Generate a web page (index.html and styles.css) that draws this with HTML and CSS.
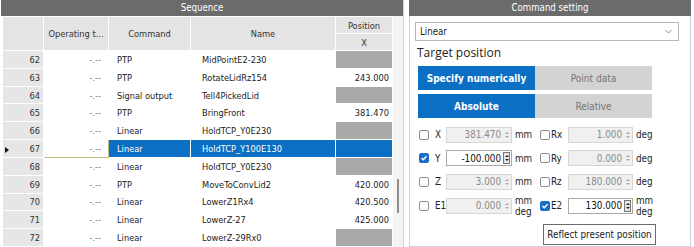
FILE: index.html
```html
<!DOCTYPE html>
<html lang="en">
<head>
    <meta charset="UTF-8">
    <title>Sequence</title>
    <link rel="stylesheet" href="styles.css">
</head>
<body>
    <!-- sequence list -->
    <div class="seq">
        <div class="title">Sequence</div>
        <div class="seq-body">
            <table class="grid">
                <colgroup>
                    <col style="width:41px"><col style="width:65px"><col style="width:82px"><col style="width:145px"><col style="width:57px">
                </colgroup>
                <thead>
                    <tr>
                        <th rowspan="2"></th>
                        <th rowspan="2">Operating t...</th>
                        <th rowspan="2">Command</th>
                        <th rowspan="2">Name</th>
                        <th>Position</th>
                    </tr>
                    <tr><th>X</th></tr>
                </thead>
                <tbody>
                    <tr><td class="no">62</td><td class="op">-.--</td><td class="cmd">PTP</td><td class="name">MidPointE2-230</td><td class="pos off"></td></tr>
                    <tr><td class="no">63</td><td class="op">-.--</td><td class="cmd">PTP</td><td class="name">RotateLidRz154</td><td class="pos">243.000</td></tr>
                    <tr><td class="no">64</td><td class="op">-.--</td><td class="cmd">Signal output</td><td class="name">Tell4PickedLid</td><td class="pos off"></td></tr>
                    <tr><td class="no">65</td><td class="op">-.--</td><td class="cmd">PTP</td><td class="name">BringFront</td><td class="pos">381.470</td></tr>
                    <tr><td class="no">66</td><td class="op">-.--</td><td class="cmd">Linear</td><td class="name">HoldTCP_Y0E230</td><td class="pos off"></td></tr>
                    <tr class="sel"><td class="no"><span class="mark"></span>67</td><td class="op focus">-.--</td><td class="cmd">Linear</td><td class="name">HoldTCP_Y100E130</td><td class="pos"></td></tr>
                    <tr><td class="no">68</td><td class="op">-.--</td><td class="cmd">Linear</td><td class="name">HoldTCP_Y0E230</td><td class="pos off"></td></tr>
                    <tr><td class="no">69</td><td class="op">-.--</td><td class="cmd">PTP</td><td class="name">MoveToConvLid2</td><td class="pos">420.000</td></tr>
                    <tr><td class="no">70</td><td class="op">-.--</td><td class="cmd">Linear</td><td class="name">LowerZ1Rx4</td><td class="pos">420.500</td></tr>
                    <tr><td class="no">71</td><td class="op">-.--</td><td class="cmd">Linear</td><td class="name">LowerZ-27</td><td class="pos">425.000</td></tr>
                    <tr><td class="no">72</td><td class="op">-.--</td><td class="cmd">Linear</td><td class="name">LowerZ-29Rx0</td><td class="pos off"></td></tr>
                </tbody>
            </table>
            <div class="track"><div class="thumb"></div></div>
        </div>
    </div>

    <!-- command setting -->
    <div class="setting">
        <div class="title">Command setting</div>
        <div class="setting-body">
            <div class="select">
                <span>Linear</span>
                <svg width="7" height="5" viewBox="0 0 7 5"><polyline points="0.5,1 3.5,4 6.5,1" fill="none" stroke="#888" stroke-width="1"/></svg>
            </div>
            <div class="heading">Target position</div>
            <div class="seg">
                <div class="on">Specify numerically</div>
                <div class="off">Point data</div>
            </div>
            <div class="seg">
                <div class="on">Absolute</div>
                <div class="off">Relative</div>
            </div>

            <div class="axes">
                <div class="axis">
                    <span class="cb"></span><span class="lbl">X</span>
                    <span class="num">381.470<i class="spin"></i></span><span class="unit">mm</span>
                    <span class="cb"></span><span class="lbl2">Rx</span>
                    <span class="num num2">1.000<i class="spin"></i></span><span class="unit">deg</span>
                </div>
                <div class="axis">
                    <span class="cb on"><svg width="8" height="8" viewBox="0 0 8 8"><polyline points="1.5,4 3.3,5.8 6.5,2.2" fill="none" stroke="#fff" stroke-width="1.4"/></svg></span><span class="lbl">Y</span>
                    <span class="num on">-100.000<i class="spin on"></i></span><span class="unit">mm</span>
                    <span class="cb"></span><span class="lbl2">Ry</span>
                    <span class="num num2">0.000<i class="spin"></i></span><span class="unit">deg</span>
                </div>
                <div class="axis">
                    <span class="cb"></span><span class="lbl">Z</span>
                    <span class="num">3.000<i class="spin"></i></span><span class="unit">mm</span>
                    <span class="cb"></span><span class="lbl2">Rz</span>
                    <span class="num num2">180.000<i class="spin"></i></span><span class="unit">deg</span>
                </div>
                <div class="axis tall">
                    <span class="cb"></span><span class="lbl">E1</span>
                    <span class="num">0.000<i class="spin"></i></span><span class="unit two">mm<br>deg</span>
                    <span class="cb on"><svg width="8" height="8" viewBox="0 0 8 8"><polyline points="1.5,4 3.3,5.8 6.5,2.2" fill="none" stroke="#fff" stroke-width="1.4"/></svg></span><span class="lbl2">E2</span>
                    <span class="num num2 on">130.000<i class="spin on"></i></span><span class="unit two">mm<br>deg</span>
                </div>
            </div>
            <button class="reflect">Reflect present position</button>
        </div>
    </div>
</body>
</html>
```

FILE: styles.css
```css
body {
    margin: 0;
    height: 247px;
    overflow: hidden;
    display: flex;
    font-family: "DejaVu Sans Condensed", "DejaVu Sans", sans-serif;
    font-size: 9.2px;
    color: #222;
    background-color: #fff;
}
.title {
    height: 16px;
    line-height: 16px;
    background-color: #6b6b6b;
    color: #fff;
    text-align: center;
    font-size: 9.6px;
}

/* sequence list */
.seq {
    width: 402px;
    margin-left: 1px;
    border-right: 1px solid #d4d4d4;
    display: flex;
    flex-direction: column;
}
.seq-body {
    display: flex;
    flex: 1;
}
.grid {
    border-collapse: collapse;
    table-layout: fixed;
    width: 390px;
    margin-left: 1px;
}
.grid th {
    background-color: #e4e4e4;
    border: 1px solid #fff;
    font-weight: normal;
    color: #333;
    height: 16px;
    padding: 0;
}
.grid tbody tr {
    height: 17.7px;
}
.grid td {
    border: 1px solid #fff;
    padding: 0;
    white-space: nowrap;
    overflow: hidden;
}
.grid td.no {
    background-color: #e6e6e6;
    text-align: right;
    padding-right: 3px;
    color: #333;
}
.grid td.op {
    text-align: right;
    padding-right: 7px;
    color: #777;
}
.grid td.cmd {
    padding-left: 8px;
}
.grid td.name {
    padding-left: 11px;
}
.grid td.pos {
    text-align: right;
    padding-right: 3px;
}
.grid td.off {
    background-color: #a9a9a9;
}
.grid tr.sel td.cmd,
.grid tr.sel td.name,
.grid tr.sel td.pos {
    background-color: #0b6fc3;
    color: #fff;
}
.grid td.focus {
    border: 1px solid #c2bf86;
}
.mark {
    float: left;
    margin: 4px 0 0 2px;
    width: 0;
    height: 0;
    border-top: 3px solid transparent;
    border-bottom: 3px solid transparent;
    border-left: 4px solid #111;
}
.track {
    flex: 1;
    background-color: #f4f4f4;
}
.thumb {
    width: 2px;
    height: 34px;
    margin: 163px 0 0 4px;
    background-color: #8c8c8c;
}

/* command setting */
.setting {
    width: 282px;
    margin-left: 5px;
    display: flex;
    flex-direction: column;
}
.setting-body {
    flex: 1;
    border: 1px solid #d2d2d2;
    border-top: none;
    padding: 6px 0 0 5px;
}
.select {
    width: 264px;
    height: 19px;
    box-sizing: border-box;
    border: 1px solid #b9b9b9;
    display: flex;
    align-items: center;
    justify-content: space-between;
    padding: 0 6px 0 4px;
    font-size: 9.6px;
}
.heading {
    font-family: "Open Sans", "Noto Sans", sans-serif;
    font-size: 12px;
    line-height: 16px;
    margin: 4px 0 0 2px;
    color: #222;
}
.seg {
    display: flex;
    margin: 5px 0 0 3px;
    height: 24px;
}
.seg + .seg {
    margin-top: 4px;
}
.seg div {
    width: 117px;
    display: flex;
    align-items: center;
    justify-content: center;
    font-size: 10px;
}
.seg .on {
    background-color: #0b6fc3;
    color: #fff;
    font-weight: bold;
}
.seg .off {
    background-color: #d3d3d3;
    color: #737373;
}
.axes {
    margin-top: 5px;
    font-size: 9.8px;
}
.axis {
    display: flex;
    align-items: center;
    height: 23.5px;
    padding-left: 4px;
}
.axis.tall {
    height: 24px;
}
.cb {
    width: 10px;
    height: 10px;
    box-sizing: border-box;
    border: 1px solid #8e8e8e;
    border-radius: 2px;
    display: flex;
    align-items: center;
    justify-content: center;
}
.cb.on {
    background-color: #1a6ec5;
    border-color: #1a6ec5;
}
.lbl {
    width: 17px;
    box-sizing: border-box;
    padding-left: 6px;
}
.lbl2 {
    width: 18px;
    box-sizing: border-box;
    padding-left: 1px;
}
.num {
    width: 66px;
    height: 16px;
    box-sizing: border-box;
    border: 1px solid #d6d6d6;
    background-color: #f0f0f0;
    color: #8a8a8a;
    display: flex;
    align-items: center;
    justify-content: flex-end;
    padding-right: 1px;
}
.num2 {
    width: 65px;
}
.num.on {
    background-color: #fff;
    border-color: #a9a9a9;
    color: #111;
}
.spin {
    width: 7px;
    height: 12px;
    margin-left: 2px;
    display: flex;
    flex-direction: column;
    align-items: center;
    justify-content: center;
    gap: 2px;
}
.spin::before,
.spin::after {
    content: "";
    width: 0;
    height: 0;
    border-left: 2px solid transparent;
    border-right: 2px solid transparent;
}
.spin::before {
    border-bottom: 2px solid #aaa;
}
.spin::after {
    border-top: 2px solid #aaa;
}
.spin.on {
    background-color: #e6e6e6;
    border: 1px solid #777;
    box-sizing: border-box;
}
.spin.on::before {
    border-bottom-color: #222;
}
.spin.on::after {
    border-top-color: #222;
}
.unit {
    width: 28px;
    box-sizing: border-box;
    padding-left: 3px;
}
.unit.two {
    line-height: 11px;
    align-self: flex-start;
    margin-top: 1px;
}
.reflect {
    display: block;
    margin: 6px 0 0 128px;
    width: 113px;
    height: 21px;
    border: 1px solid #6b6b6b;
    background-color: #fff;
    font-family: "DejaVu Sans Condensed", "DejaVu Sans", sans-serif;
    font-size: 9.8px;
    color: #222;
    padding: 0;
}
```
